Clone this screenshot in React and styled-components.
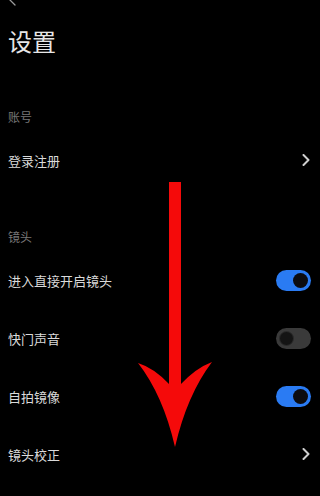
import React from "react";
import styled, { createGlobalStyle } from "styled-components";

const Global = createGlobalStyle`
  html, body { margin: 0; padding: 0; background: #000; }
  body { font-family: "Noto Sans CJK SC", "Noto Sans", sans-serif; }
`;

const Screen = styled.div`
  position: relative;
  width: 320px;
  height: 496px;
  overflow: hidden;
  background: #000;
  padding: 0 9px 0 8px;
  box-sizing: border-box;
  display: flex;
  flex-direction: column;
`;

const BackBar = styled.div`
  height: 29px;
  display: flex;
  align-items: flex-start;
`;

const Title = styled.h1`
  margin: 0;
  font-size: 24px;
  line-height: 24px;
  height: 24px;
  font-weight: 400;
  color: #e6e6e6;
`;

const SectionHeader = styled.div`
  font-size: 12px;
  line-height: 12px;
  color: #777;
  padding-top: ${(p) => p.$top}px;
  padding-bottom: 8px;
`;

const Row = styled.div`
  height: 58px;
  display: flex;
  align-items: center;
  justify-content: space-between;
`;

const Label = styled.span`
  font-size: 13px;
  line-height: 13px;
  color: #dadada;
`;

const Track = styled.div`
  width: 35px;
  height: 21px;
  border-radius: 11px;
  box-sizing: border-box;
  background: ${(p) => (p.$on ? "#2a7bf3" : "#3a3a3a")};
  display: flex;
  align-items: center;
  justify-content: ${(p) => (p.$on ? "flex-end" : "flex-start")};
  padding: 0 3px;
`;

const Knob = styled.div`
  width: 15px;
  height: 15px;
  border-radius: 50%;
  box-sizing: border-box;
  background: ${(p) => (p.$on ? "#0c0c10" : "#141414")};
  border: ${(p) => (p.$on ? "none" : "1px solid #2c2c2c")};
`;

const Toggle = ({ on }) => (
  <Track $on={on}>
    <Knob $on={on} />
  </Track>
);

const Chevron = () => (
  <svg width="8" height="12" viewBox="0 0 8 12" style={{ marginRight: 1 }}>
    <path d="M1.5 1 L6.5 6 L1.5 11" fill="none" stroke="#cfcfcf" strokeWidth="2" strokeLinecap="round" strokeLinejoin="round" />
  </svg>
);

const BackIcon = () => (
  <svg width="12" height="8" viewBox="0 0 12 8">
    <path d="M1 -1 L7 5" fill="none" stroke="#9a9a9a" strokeWidth="1.3" strokeLinecap="round" />
  </svg>
);

const ArrowOverlay = styled.svg`
  position: absolute;
  left: 136px;
  top: 180px;
  width: 80px;
  height: 270px;
`;

const RedArrow = () => (
  <ArrowOverlay viewBox="136 180 80 270">
    <path
      d="M169 182 H181 V384 Q196 368 212 362 Q187 395 175 447 Q163 395 138 363 Q154 368 169 384 Z"
      fill="#f50a0a"
    />
  </ArrowOverlay>
);

export default function App() {
  return (
    <>
      <Global />
      <Screen>
        <BackBar>
          <BackIcon />
        </BackBar>
        <Title>设置</Title>
        <SectionHeader $top={58}>账号</SectionHeader>
        <Row>
          <Label>登录注册</Label>
          <Chevron />
        </Row>
        <SectionHeader $top={42}>镜头</SectionHeader>
        <Row>
          <Label>进入直接开启镜头</Label>
          <Toggle on />
        </Row>
        <Row>
          <Label>快门声音</Label>
          <Toggle />
        </Row>
        <Row>
          <Label>自拍镜像</Label>
          <Toggle on />
        </Row>
        <Row>
          <Label>镜头校正</Label>
          <Chevron />
        </Row>
        <RedArrow />
      </Screen>
    </>
  );
}
